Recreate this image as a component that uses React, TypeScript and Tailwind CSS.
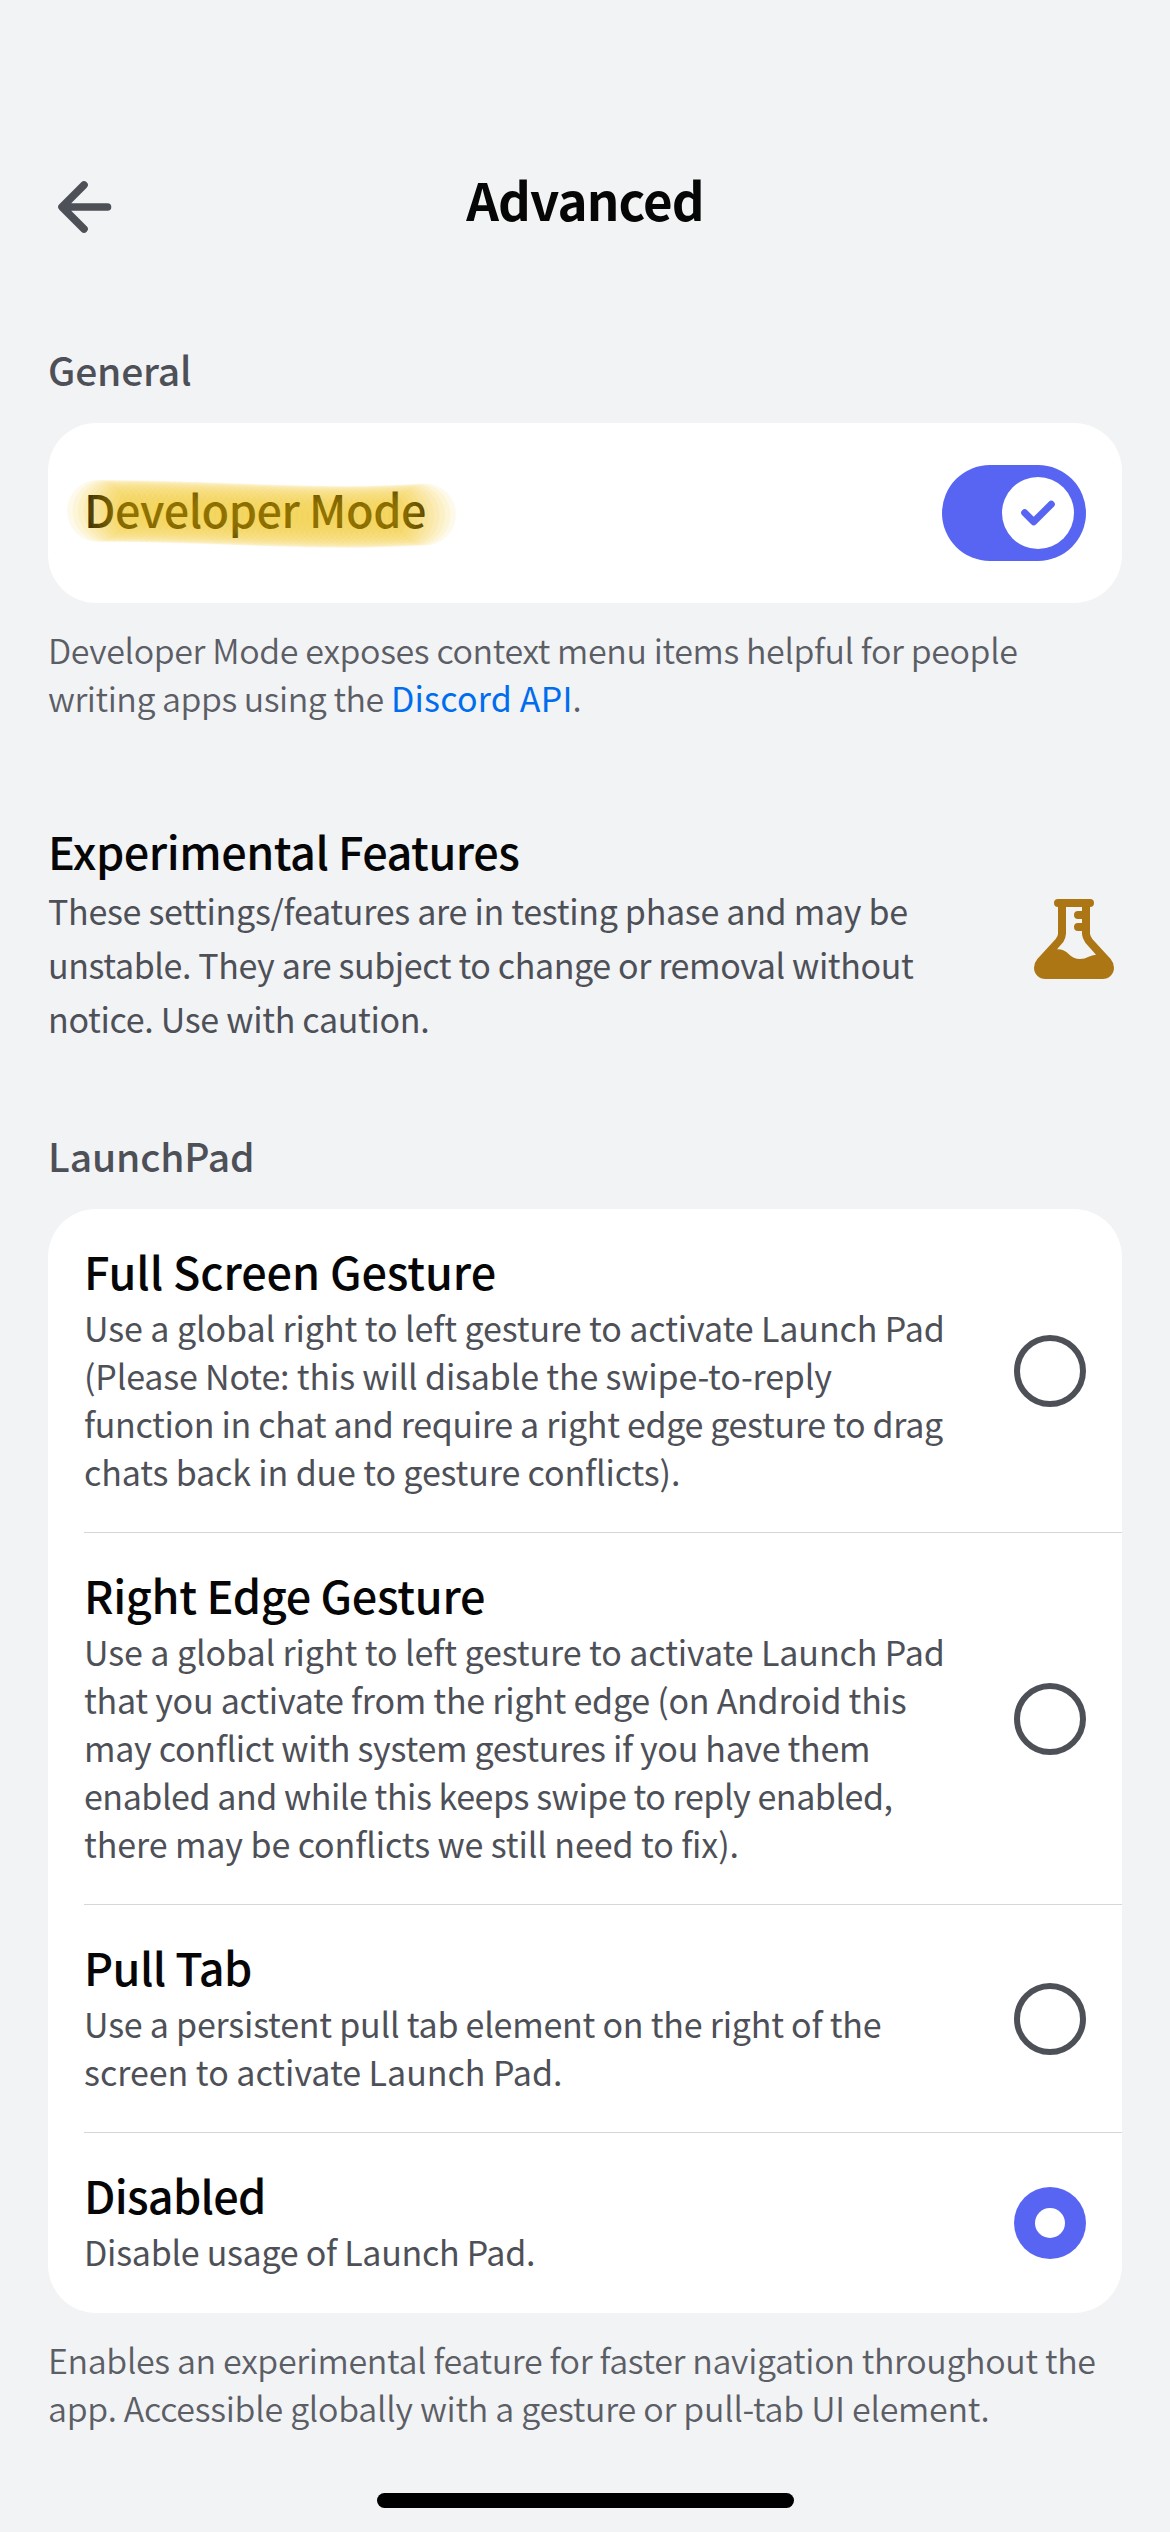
import type { ReactNode } from "react";
import clsx from "clsx";

type TextLine = { text: ReactNode; tracking: string };

type Option = {
  title: string;
  titleTracking: string;
  lines: TextLine[];
  selected?: boolean;
};

const options: Option[] = [
  {
    title: "Full Screen Gesture",
    titleTracking: "tracking-[-0.095px]",
    lines: [
      { text: "Use a global right to left gesture to activate Launch Pad", tracking: "tracking-[-0.1px]" },
      { text: "(Please Note: this will disable the swipe-to-reply", tracking: "tracking-[-0.17px]" },
      { text: "function in chat and require a right edge gesture to drag", tracking: "tracking-[-0.337px]" },
      { text: "chats back in due to gesture conflicts).", tracking: "tracking-[-0.141px]" },
    ],
  },
  {
    title: "Right Edge Gesture",
    titleTracking: "tracking-[-0.315px]",
    lines: [
      { text: "Use a global right to left gesture to activate Launch Pad", tracking: "tracking-[-0.1px]" },
      { text: "that you activate from the right edge (on Android this", tracking: "tracking-[-0.254px]" },
      { text: "may conflict with system gestures if you have them", tracking: "tracking-[-0.304px]" },
      { text: "enabled and while this keeps swipe to reply enabled,", tracking: "tracking-[-0.463px]" },
      { text: "there may be conflicts we still need to fix).", tracking: "tracking-[-0.104px]" },
    ],
  },
  {
    title: "Pull Tab",
    titleTracking: "tracking-[-0.547px]",
    lines: [
      { text: "Use a persistent pull tab element on the right of the", tracking: "tracking-[-0.234px]" },
      { text: "screen to activate Launch Pad.", tracking: "tracking-[-0.034px]" },
    ],
  },
  {
    title: "Disabled",
    titleTracking: "tracking-[-0.726px]",
    lines: [{ text: "Disable usage of Launch Pad.", tracking: "tracking-[-0.286px]" }],
    selected: true,
  },
];

function Lines({ lines, className }: { lines: TextLine[]; className: string }) {
  return (
    <p className={className}>
      {lines.map((line, i) => (
        <span key={i} className={clsx("block whitespace-nowrap", line.tracking)}>
          {line.text}
        </span>
      ))}
    </p>
  );
}

function BackArrow() {
  return (
    <svg className="h-[60px] w-[60px]" viewBox="0 0 60 60" fill="none" stroke="#4e5058" strokeWidth="7.6" strokeLinecap="round" strokeLinejoin="round">
      <path d="M31 8 9 30l22 22M9.5 30h45" />
    </svg>
  );
}

/* Marker stroke built from translucent dabs laid along a gentle wave. */
function Highlighter() {
  const dabs = Array.from({ length: 61 }, (_, i) => {
    const t = i / 60;
    const x = 32 + t * 327;
    const y = 34 + 3 * Math.sin((t - 0.4) * Math.PI * 1.25) + (t > 0.8 ? (0.8 - t) * 8 : 0);
    return { x, y };
  });
  return (
    <svg className="pointer-events-none absolute -left-[18px] top-px h-[72px] w-[390px]" viewBox="0 0 390 72">
      {dabs.map((d, i) => (
        <circle key={i} cx={d.x} cy={d.y} r="31" fill="#f0bc00" fillOpacity="0.08" />
      ))}
    </svg>
  );
}

function Flask() {
  return (
    <svg className="h-20 w-20" viewBox="0 0 240 240" fill="#ad7615">
      <path
        fillRule="evenodd"
        d="M72 0H168A12 12 0 0 1 168 24V104Q169 112 175 120L230 180Q240 192 240 206A34 34 0 0 1 206 240H34A34 34 0 0 1 0 206Q0 192 10 180L65 120Q72 112 72 104V24A12 12 0 0 1 72 0ZM96 24V104Q95 118 88 129L69 151Q90 150 104 165Q118 180 138 180Q152 180 164 173Q174 168 186 167L154 131Q145 119 144 106V96H132A12 12 0 0 1 132 72H144V60H132A12 12 0 0 1 132 36H144V24Z"
      />
    </svg>
  );
}

function Toggle() {
  return (
    <div className="flex h-24 w-36 items-center justify-end rounded-full bg-[#5865f2] pr-3">
      <div className="flex size-[72px] items-center justify-center rounded-full bg-white">
        <svg className="size-[72px]" viewBox="0 0 72 72" fill="none" stroke="#5865f2" strokeWidth="7" strokeLinecap="round" strokeLinejoin="round">
          <path d="M22.7 35.8 31.7 44.8 49.3 27.2" />
        </svg>
      </div>
    </div>
  );
}

function Radio({ selected }: { selected?: boolean }) {
  return selected ? (
    <div className="mt-px flex size-[72px] items-center justify-center rounded-full bg-[#5865f2]">
      <div className="size-[30px] rounded-full bg-white" />
    </div>
  ) : (
    <div className="mt-px size-[72px] rounded-full border-6 border-[#4e5058]" />
  );
}

export default function App() {
  return (
    <main className="flex h-[2532px] w-[1170px] flex-col overflow-hidden bg-[#f2f3f5] font-['Noto_Sans_CJK_SC',sans-serif] text-[#060607]">
      <header className="grid h-[274px] shrink-0 grid-cols-[1fr_auto_1fr] border-b border-[#f3f4f6] px-[53px] pt-[169px]">
        <div className="pt-2">
          <BackArrow />
        </div>
        <h1 className="text-[51px] font-bold leading-[60px] tracking-[-0.865px]">Advanced</h1>
      </header>

      <section className="px-12 pt-[71px]">
        <h2 className="text-[39px] font-medium leading-[48px] tracking-[-0.186px] text-[#4e5058]">General</h2>
        <div className="mt-[30px] flex h-[180px] items-center justify-between rounded-[48px] bg-white px-9">
          <div className="relative mb-2 text-[45px] font-medium leading-[60px] tracking-[-0.498px]">
            Developer Mode
            <Highlighter />
          </div>
          <Toggle />
        </div>
        <Lines
          className="mt-[23px] text-[34px] font-[350] leading-[48px] text-[#5c5e66]"
          lines={[
            { text: "Developer Mode exposes context menu items helpful for people", tracking: "tracking-[-0.377px]" },
            {
              text: (
                <>
                  writing apps using the <span className="font-normal tracking-[0.2px] text-[#006dee]">Discord API</span>.
                </>
              ),
              tracking: "tracking-[-0.47px]",
            },
          ]}
        />
      </section>

      <section className="mt-[99px] flex justify-between px-12">
        <div>
          <h2 className="text-[45px] font-medium leading-[60px] tracking-[-0.483px]">Experimental Features</h2>
          <Lines
            className="mt-[3px] text-[34px] leading-[54px] text-[#4e5058]"
            lines={[
              { text: "These settings/features are in testing phase and may be", tracking: "tracking-[-0.294px]" },
              { text: "unstable. They are subject to change or removal without", tracking: "tracking-[-0.397px]" },
              { text: "notice. Use with caution.", tracking: "tracking-[-0.321px]" },
            ]}
          />
        </div>
        <div className="mr-2 mt-[78px]">
          <Flask />
        </div>
      </section>

      <section className="mt-[85px] px-12">
        <h2 className="text-[39px] font-medium leading-[48px] tracking-[-0.129px] text-[#4e5058]">LaunchPad</h2>
        <div className="mt-[30px] rounded-[48px] bg-white pl-9">
          {options.map((option) => (
            <div
              key={option.title}
              className="flex items-center justify-between border-b border-[#d5d6d9] pr-9 last:border-transparent"
            >
              <div className="pb-9 pt-8">
                <h3 className={clsx("text-[45px] font-medium leading-[60px]", option.titleTracking)}>{option.title}</h3>
                <Lines className="mt-[3px] text-[34px] leading-[48px] text-[#4e5058]" lines={option.lines} />
              </div>
              <Radio selected={option.selected} />
            </div>
          ))}
        </div>
        <Lines
          className="mt-[23px] text-[34px] font-[350] leading-[48px] text-[#5c5e66]"
          lines={[
            { text: "Enables an experimental feature for faster navigation throughout the", tracking: "tracking-[-0.345px]" },
            { text: "app. Accessible globally with a gesture or pull-tab UI element.", tracking: "tracking-[-0.264px]" },
          ]}
        />
      </section>

      <div className="mb-6 mt-auto h-[15px] w-[417px] self-center rounded-full bg-black" />
    </main>
  );
}
